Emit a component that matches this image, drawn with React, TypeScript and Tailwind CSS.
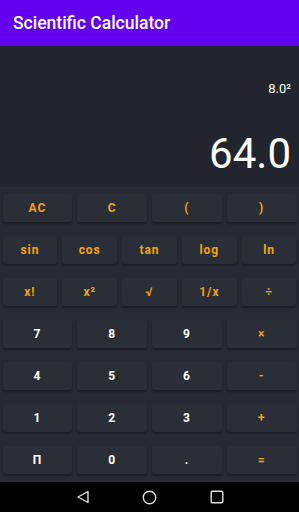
import React from 'react';

type Key = { label: string; accent?: boolean };

const rows: Key[][] = [
  [{ label: 'AC', accent: true }, { label: 'C', accent: true }, { label: '(', accent: true }, { label: ')', accent: true }],
  [{ label: 'sin', accent: true }, { label: 'cos', accent: true }, { label: 'tan', accent: true }, { label: 'log', accent: true }, { label: 'ln', accent: true }],
  [{ label: 'x!', accent: true }, { label: 'x²', accent: true }, { label: '√', accent: true }, { label: '1/x', accent: true }, { label: '÷', accent: true }],
  [{ label: '7' }, { label: '8' }, { label: '9' }, { label: '×', accent: true }],
  [{ label: '4' }, { label: '5' }, { label: '6' }, { label: '-', accent: true }],
  [{ label: '1' }, { label: '2' }, { label: '3' }, { label: '+', accent: true }],
  [{ label: 'Π' }, { label: '0' }, { label: '.' }, { label: '=', accent: true }],
];

function KeyButton({ k }: { k: Key }) {
  return (
    <div className="flex-1 px-[2.5px]">
      <button
        type="button"
        className={`flex h-[28px] w-full items-center justify-center rounded-[3px] bg-[#2a2e37] text-[12px] font-bold tracking-[0.08em] shadow-[0_2px_2px_rgba(0,0,0,0.3)] ${
          k.accent ? 'text-[#f5a30c]' : 'text-white'
        }`}
      >
        {k.label}
      </button>
    </div>
  );
}

export default function App() {
  return (
    <div className="flex h-[512px] w-full flex-col overflow-hidden bg-[#22252d] font-['Roboto',sans-serif]">
      <div className="h-[46px] shrink-0 bg-[#6200ee] pl-[13px] pt-[15px]">
        <h1 className="text-[17.5px] font-medium leading-none text-white">Scientific Calculator</h1>
      </div>

      <div className="flex h-[141px] shrink-0 flex-col items-end pr-[8px] pt-[36px]">
        <div className="text-[13px] leading-none text-white">8.0²</div>
        <div className="mt-[38px] text-[42px] leading-none text-white">64.0</div>
      </div>

      <div className="flex h-[295px] shrink-0 flex-col bg-[#272a33]">
        {rows.map((row, i) => (
          <div key={i} className="flex h-[42px] items-center">
            {row.map((k) => (
              <KeyButton key={k.label} k={k} />
            ))}
          </div>
        ))}
      </div>

      <div className="flex h-[30px] shrink-0 items-center bg-black">
        <div className="flex w-full items-center">
          <svg className="ml-[76px]" width="14" height="14" viewBox="0 0 14 14" fill="none">
            <path d="M12 1.5 L2 7 L12 12.5 Z" stroke="#e0e0e0" strokeWidth="1.4" strokeLinejoin="round" />
          </svg>
          <svg className="ml-[52px]" width="15" height="15" viewBox="0 0 15 15" fill="none">
            <circle cx="7.5" cy="7.5" r="6.2" stroke="#e0e0e0" strokeWidth="1.4" />
          </svg>
          <svg className="ml-[53px]" width="14" height="14" viewBox="0 0 14 14" fill="none">
            <rect x="1.2" y="1.2" width="11.6" height="11.6" rx="1.2" stroke="#e0e0e0" strokeWidth="1.4" />
          </svg>
        </div>
      </div>
    </div>
  );
}
